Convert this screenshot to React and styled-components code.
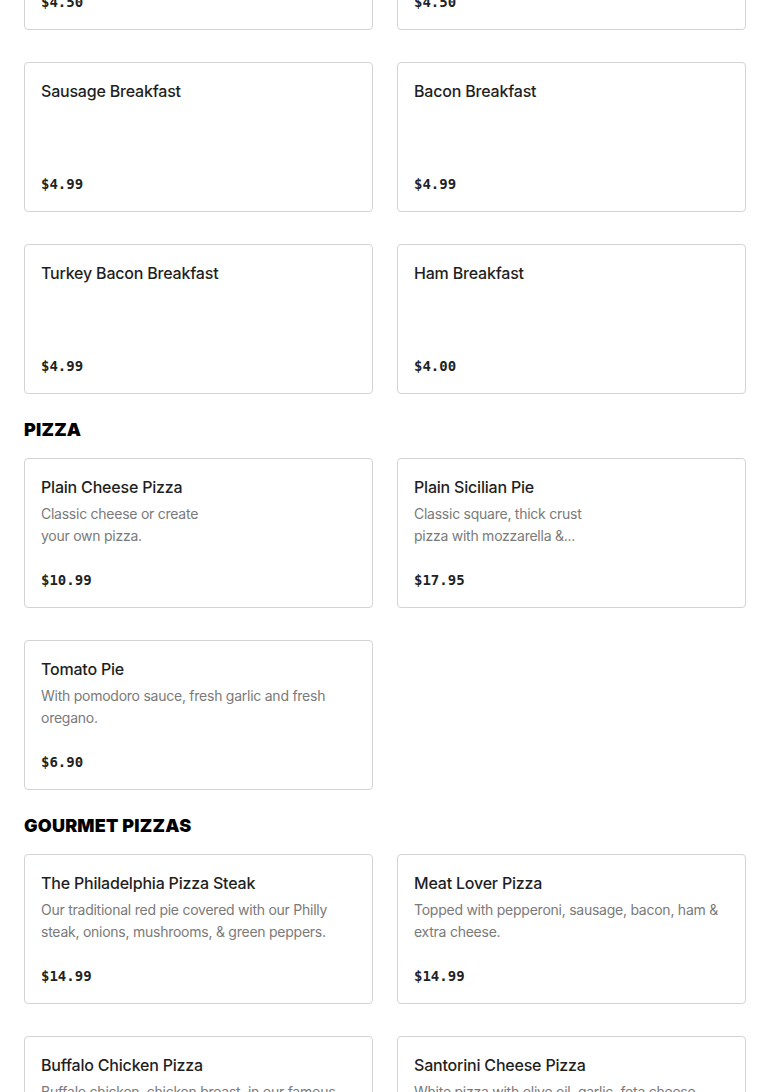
import React from 'react';
import styled, { createGlobalStyle } from 'styled-components';

const GlobalStyle = createGlobalStyle`
  * {
    box-sizing: border-box;
  }

  body {
    margin: 0;
    background: #fff;
    font-family: Inter, 'Liberation Sans', sans-serif;
    overflow: hidden;
  }
`;

const Page = styled.main`
  /* page is shown scrolled part way down the menu */
  margin-top: -120px;
  padding: 0 24px;
`;

const Section = styled.section`
  & + & {
    margin-top: 24px;
  }
`;

const SectionTitle = styled.h2`
  margin: 0 0 16px;
  font-family: Inter, 'Liberation Sans', sans-serif;
  font-size: 18px;
  font-weight: 900;
  line-height: 24px;
  letter-spacing: 0.2px;
  text-transform: uppercase;
  color: #000;
`;

const Grid = styled.div`
  display: grid;
  grid-template-columns: 1fr 1fr;
  column-gap: 24px;
  row-gap: 32px;
`;

const Card = styled.article`
  display: flex;
  flex-direction: column;
  height: 150px;
  padding: 16px 16px 15px;
  border: 1px solid #d4d4d4;
  border-radius: 4px;
  background: #fff;
`;

const ItemName = styled.h3`
  margin: 0;
  font-size: 16px;
  font-weight: 500;
  line-height: 24px;
  letter-spacing: -0.2px;
  color: #1f1f1f;
`;

const ItemDescription = styled.p`
  margin: 4px 0 0;
  font-size: 14px;
  line-height: 22px;
  letter-spacing: -0.25px;
  color: #7a7a7a;
  display: -webkit-box;
  -webkit-line-clamp: 2;
  -webkit-box-orient: vertical;
  overflow: hidden;
`;

const Price = styled.span`
  margin-top: auto;
  font-family: 'DejaVu Sans Mono', 'Liberation Mono', monospace;
  font-size: 14px;
  font-weight: 700;
  line-height: 24px;
  color: #222;
`;

const menu = [
  {
    title: null,
    items: [
      { name: 'Egg & Cheese Breakfast', price: '$4.50' },
      { name: 'Egg Breakfast', price: '$4.50' },
      { name: 'Sausage Breakfast', price: '$4.99' },
      { name: 'Bacon Breakfast', price: '$4.99' },
      { name: 'Turkey Bacon Breakfast', price: '$4.99' },
      { name: 'Ham Breakfast', price: '$4.00' },
    ],
  },
  {
    title: 'Pizza',
    items: [
      {
        name: 'Plain Cheese Pizza',
        description: ['Classic cheese or create', 'your own pizza.'],
        price: '$10.99',
      },
      {
        name: 'Plain Sicilian Pie',
        description: ['Classic square, thick crust', 'pizza with mozzarella &...'],
        price: '$17.95',
      },
      {
        name: 'Tomato Pie',
        description: 'With pomodoro sauce, fresh garlic and fresh oregano.',
        price: '$6.90',
      },
    ],
  },
  {
    title: 'Gourmet Pizzas',
    items: [
      {
        name: 'The Philadelphia Pizza Steak',
        description: 'Our traditional red pie covered with our Philly steak, onions, mushrooms, & green peppers.',
        price: '$14.99',
      },
      {
        name: 'Meat Lover Pizza',
        description: 'Topped with pepperoni, sausage, bacon, ham & extra cheese.',
        price: '$14.99',
      },
      {
        name: 'Buffalo Chicken Pizza',
        description: 'Buffalo chicken, chicken breast, in our famous buffalo sauce with mozzarella.',
        price: '$15.99',
      },
      {
        name: 'Santorini Cheese Pizza',
        description: 'White pizza with olive oil, garlic, feta cheese, spinach and tomatoes.',
        price: '$15.99',
      },
    ],
  },
];

function Description({ text }) {
  if (!text) return null;
  if (Array.isArray(text)) {
    return (
      <ItemDescription>
        {text[0]}
        <br />
        {text[1]}
      </ItemDescription>
    );
  }
  return <ItemDescription>{text}</ItemDescription>;
}

function MenuCard({ item }) {
  return (
    <Card>
      <ItemName>{item.name}</ItemName>
      <Description text={item.description} />
      <Price>{item.price}</Price>
    </Card>
  );
}

export default function App() {
  return (
    <>
      <GlobalStyle />
      <Page>
        {menu.map((section, i) => (
          <Section key={section.title || i}>
            {section.title && <SectionTitle>{section.title}</SectionTitle>}
            <Grid>
              {section.items.map((item) => (
                <MenuCard key={item.name} item={item} />
              ))}
            </Grid>
          </Section>
        ))}
      </Page>
    </>
  );
}
